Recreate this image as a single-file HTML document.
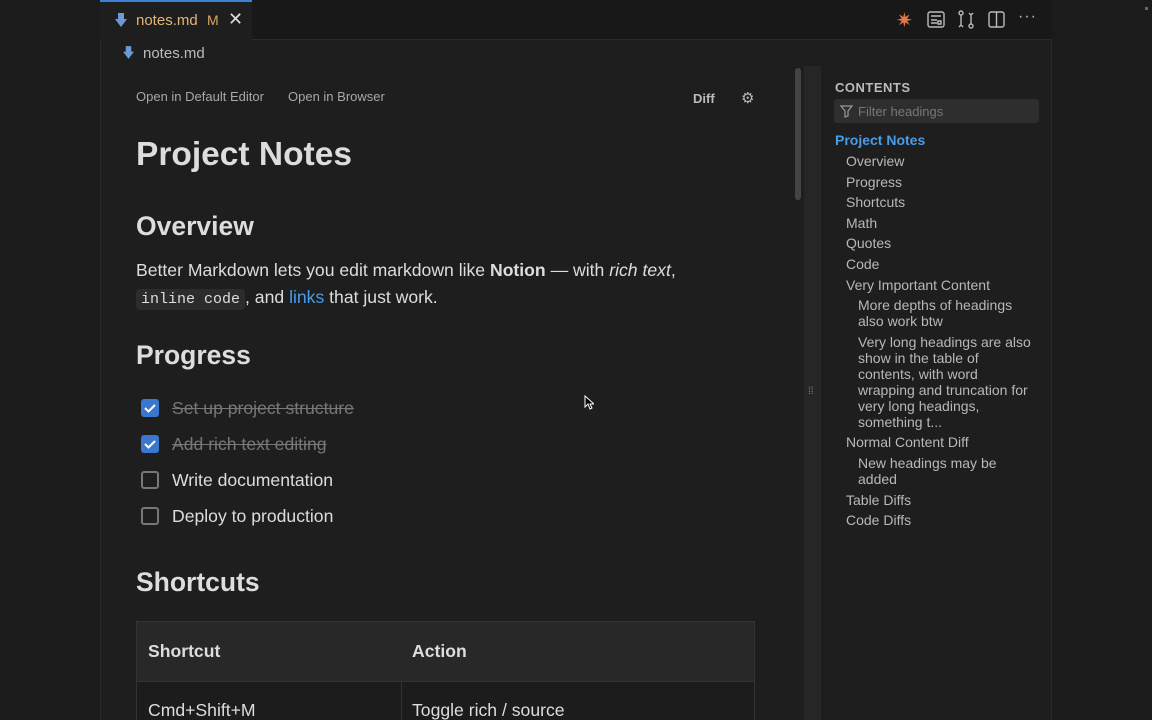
<!DOCTYPE html>
<html style="overflow:hidden;height:720px"><head><meta charset="utf-8"><style>
*{margin:0;padding:0;box-sizing:border-box}
body{width:1152px;height:720px;background:#1b1b1b;font-family:"Liberation Sans",sans-serif;color:#ccc;position:relative;overflow:hidden}
.a{position:absolute;white-space:nowrap}
#ed{position:absolute;left:100px;top:0;width:952px;height:720px;background:#1e1e1e;border-left:1px solid #2a2a2a;border-right:1px solid #2a2a2a}
#tabs{position:absolute;left:100px;top:0;width:952px;height:40px;background:#181818;border-bottom:1px solid #2b2b2b}
#tab{position:absolute;left:100px;top:0;width:152px;height:41px;background:#1e1e1e;border-top:2px solid #3b82d6}
h1,h2{font-weight:bold;color:#ddd}
.cb{position:absolute;left:141px;width:18px;height:18px;border-radius:3px}
.on{background:#3a78d0}
.off{border:2px solid #777}
.li{position:absolute;left:172px;font-size:17.6px;color:#ddd}
.done{color:#777;text-decoration:line-through}
.toc{position:absolute;left:846px;font-size:14px;color:#b8b8b8;line-height:16px;white-space:nowrap}
.s{left:858px}
</style></head><body>
<div id="ed"></div>
<div id="tabs"></div>
<div id="tab"></div>
<svg class="a" style="left:115px;top:13px" width="12" height="14" viewBox="0 0 12 14"><path d="M3 0h6v6h3l-6 8-6-8h3z" fill="#6b9bd6"/></svg>
<div class="a" style="left:136px;top:12px;font-size:15px;color:#e2b47a">notes.md</div>
<div class="a" style="left:207px;top:12px;font-size:14px;color:#d8a866">M</div>
<div class="a" style="left:228px;top:9px;font-size:18px;color:#ddd">✕</div>
<svg class="a" style="left:123px;top:46px" width="11" height="13" viewBox="0 0 12 14"><path d="M3 0h6v6h3l-6 8-6-8h3z" fill="#6b9bd6"/></svg>
<div class="a" style="left:143px;top:45px;font-size:15px;color:#bbb">notes.md</div>
<div class="a" style="left:896px;top:8px;font-size:20px;color:#e07a4a">✷</div>
<svg class="a" style="left:927px;top:11px" width="18" height="17" viewBox="0 0 18 17" fill="none" stroke="#bbb" stroke-width="1.4"><rect x="1" y="1" width="16" height="15" rx="2"/><path d="M4 5h10M4 9h6M4 12h6M11 10h3v3h-3z"/></svg>
<svg class="a" style="left:957px;top:10px" width="18" height="19" viewBox="0 0 18 19" fill="none" stroke="#bbb" stroke-width="1.4"><circle cx="4" cy="3" r="2"/><circle cx="14" cy="16" r="2"/><path d="M4 5v10M14 14V5M4 15l2 2M4 15l-2 2M14 5l-2-2M14 5l2-2"/></svg>
<svg class="a" style="left:988px;top:11px" width="17" height="17" viewBox="0 0 17 17" fill="none" stroke="#bbb" stroke-width="1.4"><rect x="1" y="1" width="15" height="15" rx="2"/><path d="M8.5 1v15"/></svg>
<div class="a" style="left:1018px;top:8px;font-size:16px;color:#bbb;letter-spacing:1px">···</div>
<div class="a" style="left:136px;top:89px;font-size:13px;color:#a8a8a8">Open in Default Editor</div>
<div class="a" style="left:288px;top:89px;font-size:13px;color:#a8a8a8">Open in Browser</div>
<div class="a" style="left:693px;top:91px;font-size:13px;font-weight:bold;color:#bbb">Diff</div>
<div class="a" style="left:741px;top:89px;font-size:15px;color:#bbb">⚙</div>
<div class="a" style="left:795px;top:68px;width:6px;height:132px;background:#444;border-radius:3px"></div>
<div class="a" style="left:804px;top:66px;width:17px;height:654px;background:#262626"></div>
<div class="a" style="left:808px;top:386px;font-size:10px;color:#888">⁞⁞</div>
<h1 class="a" style="left:136px;top:136px;font-size:33.5px">Project Notes</h1>
<h2 class="a" style="left:136px;top:211px;font-size:26.5px">Overview</h2>
<div class="a" style="left:136px;top:260px;font-size:17.6px;color:#ddd">Better Markdown lets you edit markdown like <b>Notion</b> — with <i>rich text</i>,</div>
<div class="a" style="left:136px;top:287px;font-size:17.6px;color:#ddd"><span style="font-family:'Liberation Mono',monospace;font-size:15px;background:#2c2c2c;padding:2px 5px;border-radius:4px">inline code</span>, and <span style="color:#4b9ce8">links</span> that just work.</div>
<h2 class="a" style="left:136px;top:340px;font-size:26.5px">Progress</h2>
<div class="cb on" style="top:399px"><svg width="18" height="18"><path d="M4 9l3.5 3.5L14 6" stroke="#fff" stroke-width="2" fill="none"/></svg></div>
<div class="li done" style="top:398px">Set up project structure</div>
<div class="cb on" style="top:435px"><svg width="18" height="18"><path d="M4 9l3.5 3.5L14 6" stroke="#fff" stroke-width="2" fill="none"/></svg></div>
<div class="li done" style="top:434px">Add rich text editing</div>
<div class="cb off" style="top:471px"></div>
<div class="li" style="top:470px">Write documentation</div>
<div class="cb off" style="top:507px"></div>
<div class="li" style="top:506px">Deploy to production</div>
<h2 class="a" style="left:136px;top:567px;font-size:26.5px">Shortcuts</h2>
<div class="a" style="left:136px;top:621px;width:619px;height:99px;border:1px solid #333;border-bottom:none;background:#1c1c1c">
<div style="height:60px;background:#282828;border-bottom:1px solid #333"></div>
<div style="position:absolute;left:264px;top:60px;width:1px;height:40px;background:#333"></div>
</div>
<div class="a" style="left:148px;top:641px;font-size:17.6px;font-weight:bold;color:#ddd">Shortcut</div>
<div class="a" style="left:412px;top:641px;font-size:17.6px;font-weight:bold;color:#ddd">Action</div>
<div class="a" style="left:148px;top:700px;font-size:17.6px;color:#ddd">Cmd+Shift+M</div>
<div class="a" style="left:412px;top:700px;font-size:17.6px;color:#ddd">Toggle rich / source</div>
<svg class="a" style="left:584px;top:395px" width="10" height="15" viewBox="0 0 10 15"><path d="M1 1v11l3-3 2 5 2-1-2-4h4z" fill="#000" stroke="#fff" stroke-width="1"/></svg>
<div class="a" style="left:835px;top:80px;font-size:13px;font-weight:bold;color:#bbb;letter-spacing:.5px">CONTENTS</div>
<div class="a" style="left:834px;top:99px;width:205px;height:24px;background:#2e2e2e;border-radius:3px"></div>
<svg class="a" style="left:840px;top:105px" width="13" height="13" viewBox="0 0 13 13"><path d="M1 1h11L8 6v5l-3 1V6z" fill="none" stroke="#999" stroke-width="1.2"/></svg>
<div class="a" style="left:858px;top:104px;font-size:13px;color:#777">Filter headings</div>
<div class="toc" style="left:835px;top:132px;color:#4b9ce8;font-weight:bold">Project Notes</div>
<div class="toc" style="top:153px">Overview</div>
<div class="toc" style="top:174px">Progress</div>
<div class="toc" style="top:194px">Shortcuts</div>
<div class="toc" style="top:215px">Math</div>
<div class="toc" style="top:235px">Quotes</div>
<div class="toc" style="top:256px">Code</div>
<div class="toc" style="top:277px">Very Important Content</div>
<div class="toc s" style="top:297px">More depths of headings<br>also work btw</div>
<div class="toc s" style="top:334px">Very long headings are also<br>show in the table of<br>contents, with word<br>wrapping and truncation for<br>very long headings,<br>something t...</div>
<div class="toc" style="top:434px">Normal Content Diff</div>
<div class="toc s" style="top:455px">New headings may be<br>added</div>
<div class="toc" style="top:492px">Table Diffs</div>
<div class="toc" style="top:512px">Code Diffs</div>
<div class="a" style="left:1145px;top:7px;width:3px;height:3px;background:#3b6fb0"></div>
</body></html>
